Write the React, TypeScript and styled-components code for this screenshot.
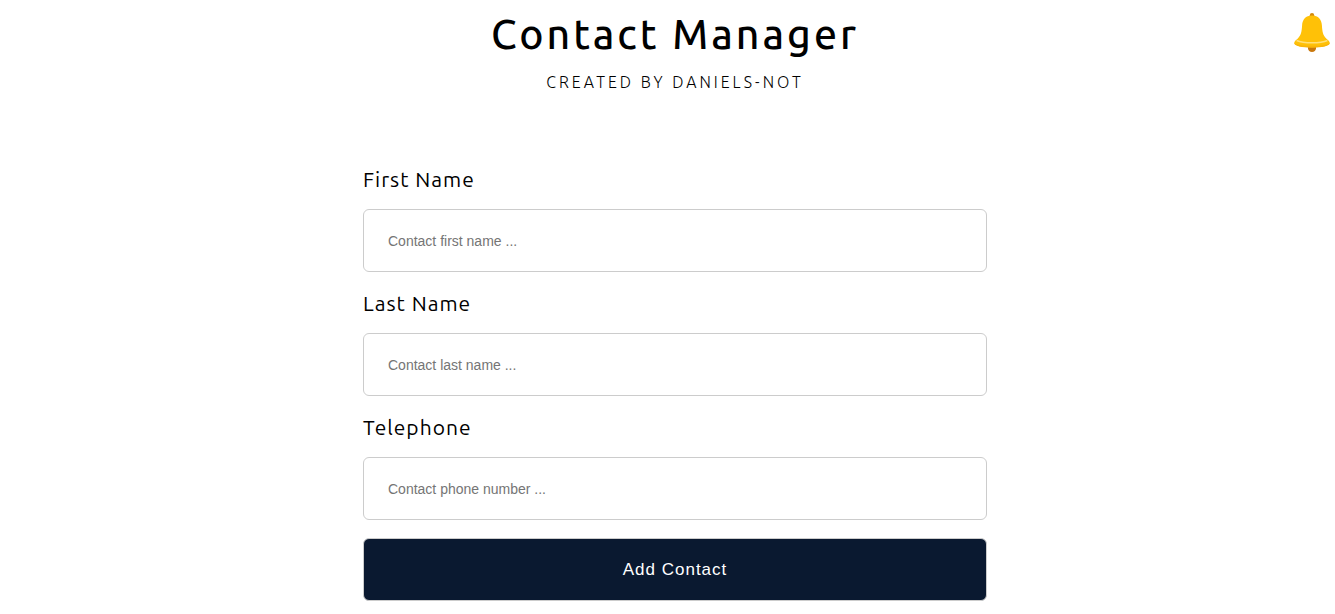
import React from "react";
import styled, { createGlobalStyle } from "styled-components";

const GlobalStyle = createGlobalStyle`
  *, *::before, *::after { box-sizing: border-box; }
  body {
    margin: 0;
    background: #fff;
    color: #000;
    font-family: Ubuntu, "Noto Sans", sans-serif;
  }
`;

const Page = styled.main`
  display: flex;
  flex-direction: column;
  align-items: center;
  padding: 8px 0 12px 15px;
`;

const Header = styled.header`
  text-align: center;
`;

const Title = styled.h1`
  margin: 0;
  font-size: 41px;
  font-weight: 500;
  line-height: 52px;
  letter-spacing: 3px;
`;

const Subtitle = styled.p`
  margin: 12px 0 0;
  font-size: 16px;
  font-weight: 300;
  line-height: 20px;
  letter-spacing: 3px;
  text-transform: uppercase;
`;

const Form = styled.form`
  display: flex;
  flex-direction: column;
  gap: 18px;
  width: 100%;
  max-width: 624px;
  margin-top: 74px;
`;

const Field = styled.div`
  display: flex;
  flex-direction: column;
  gap: 17px;
`;

const Label = styled.label`
  font-size: 21px;
  line-height: 26px;
  letter-spacing: 1px;
`;

const Input = styled.input`
  width: 100%;
  height: 63px;
  padding: 0 24px;
  border: 1px solid #ccc;
  border-radius: 6px;
  background: #fff;
  font-family: "Liberation Sans", Arial, sans-serif;
  font-size: 14px;

  &::placeholder {
    color: #757575;
  }
`;

const SubmitButton = styled.button`
  width: 100%;
  height: 63px;
  border: 1px solid #ccc;
  border-radius: 6px;
  background: #0a1930;
  color: #fff;
  font-family: "Liberation Sans", Arial, sans-serif;
  font-size: 17px;
  letter-spacing: 1px;
  cursor: pointer;
`;

const BellButton = styled.button`
  position: fixed;
  top: 12px;
  right: 3px;
  padding: 0;
  border: 0;
  background: none;
  cursor: pointer;

  svg { display: block; }
`;

const fields = [
  { id: "firstName", label: "First Name", type: "text", placeholder: "Contact first name ..." },
  { id: "lastName", label: "Last Name", type: "text", placeholder: "Contact last name ..." },
  { id: "telephone", label: "Telephone", type: "tel", placeholder: "Contact phone number ..." },
];

const Bell = () => (
  <svg width="40" height="40" viewBox="0 0 40 40" aria-hidden="true">
    <circle cx="20" cy="3.2" r="2.2" fill="#d38a0c" />
    <path d="M16 34h8v2.200c0 2.200-1.800 3.800-4 3.800s-4-1.600-4-3.800z" fill="#c9780d" />
    <path
      d="M20 3.400c-6.400 0-9.600 4.200-9.900 9.800-.3 6.400-1.200 10.400-4.300 13.200-2 1.600-3.600 3-3.600 4.600C2.200 33.600 10 35.400 20 35.400s17.800-1.800 17.800-4.400c0-1.600-1.600-3-3.600-4.600-3.100-2.800-4-6.800-4.300-13.200C29.600 7.600 26.400 3.400 20 3.400z"
      fill="#ffc107"
    />
    <path d="M4.600 28.400c4 1.800 9.400 2.400 15.400 2.400s11.400-.6 15.400-2.400" fill="none" stroke="#ffe07a" strokeWidth="1.600" />
    <path d="M2.200 31C5 33 12 33.800 20 33.800S35 33 37.800 31c0 2.900-7.800 4.600-17.800 4.600S2.200 33.900 2.200 31z" fill="#f9b50a" />
  </svg>
);

export default function App() {
  return (
    <>
      <GlobalStyle />
      <BellButton type="button" aria-label="Notifications">
        <Bell />
      </BellButton>
      <Page>
        <Header>
          <Title>Contact Manager</Title>
          <Subtitle>Created by Daniels-Not</Subtitle>
        </Header>
        <Form onSubmit={(e) => e.preventDefault()}>
          {fields.map((f) => (
            <Field key={f.id}>
              <Label htmlFor={f.id}>{f.label}</Label>
              <Input id={f.id} name={f.id} type={f.type} placeholder={f.placeholder} />
            </Field>
          ))}
          <SubmitButton type="submit">Add Contact</SubmitButton>
        </Form>
      </Page>
    </>
  );
}
